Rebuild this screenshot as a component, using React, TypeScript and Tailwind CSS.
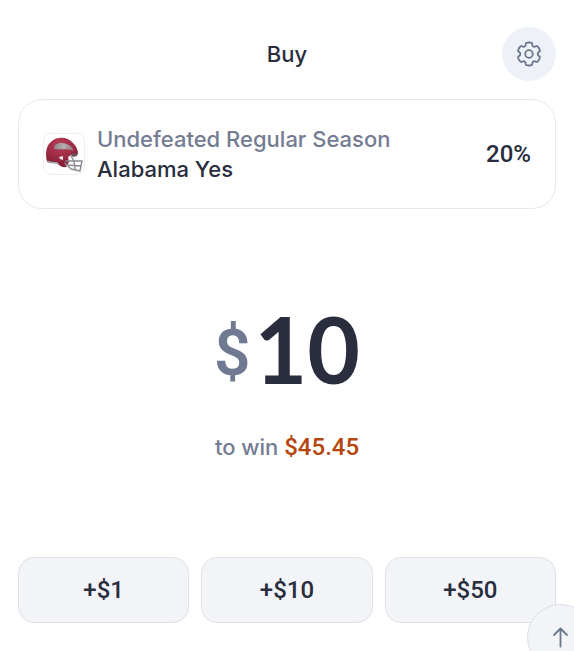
import { useState } from "react";

const QUICK_AMOUNTS = [1, 10, 50];

// Six rounded lobes around the centre of a 28x28 box, first lobe at the top
const GEAR_OUTLINE = Array.from({ length: 120 }, (_, i) => {
    const angle = (i / 120) * Math.PI * 2;
    const radius = 10.1 + 1.4 * Math.tanh(1.2 + 3 * Math.cos(6 * angle));
    return `${(14 + radius * Math.sin(angle)).toFixed(2)},${(14 - radius * Math.cos(angle)).toFixed(2)}`;
}).join(" ");

function GearIcon() {
    return (
        <svg viewBox="0 0 28 28" className="size-7" fill="none" stroke="currentColor" strokeWidth="1.800" aria-hidden="true">
            <polygon points={GEAR_OUTLINE} strokeLinejoin="round" />
            <circle cx="14" cy="14" r="3.800" />
        </svg>
    );
}

function ArrowIcon() {
    return (
        <svg viewBox="0 0 28 28" className="size-7" fill="none" stroke="currentColor" strokeWidth="1.800" aria-hidden="true">
            <path d="M13.500 22.500V4.500M7 11L13.500 4.500L20 11" strokeLinecap="round" strokeLinejoin="round" />
        </svg>
    );
}

function HelmetIcon() {
    return (
        <svg viewBox="0 0 40 40" className="size-full" aria-hidden="true">
            <defs>
                <radialGradient id="shell" cx="0.45" cy="0.25" r="0.8">
                    <stop offset="0" stopColor="#b8405a" />
                    <stop offset="0.5" stopColor="#9f2a43" />
                    <stop offset="1" stopColor="#7a1a32" />
                </radialGradient>
                <linearGradient id="decal" x1="0" y1="0" x2="1" y2="0">
                    <stop offset="0" stopColor="#8d7f84" />
                    <stop offset="0.5" stopColor="#b5afb1" />
                    <stop offset="1" stopColor="#94737d" />
                </linearGradient>
            </defs>
            {/* Shell */}
            <path
                d="M3 28C1 19 2 11 8 7C14 2 24 3 29 9C33 13 34 17 34 20L27 21L24 23L25 28L22 33C17 34 15 30 12 29Z"
                fill="url(#shell)"
            />
            <path d="M3 26C6 28 10 28 13 28L15 30L4 29Z" fill="#a3a3aa" />
            <path d="M10 15C9 9 18 7 25 11C28 13 30 15 29 17C23 14 18 16 10 15Z" fill="url(#decal)" />
            {/* Ear hole and jaw pad */}
            <path d="M15 23L19 22L19 26L16 25Z" fill="#e9e6e8" />
            <path d="M26 20L34 19L33 22L29 23Z" fill="#65535c" />
            {/* Face mask */}
            <g fill="none" stroke="#898992" strokeWidth="1.400" strokeLinejoin="round" strokeLinecap="round">
                <path d="M22 27L38 27L36 37L27 35L21 29M22 31L37 32M30 27L31 35M27 22L30 27" />
            </g>
        </svg>
    );
}

export default function App() {
    const [amount, setAmount] = useState(10);
    const payout = (amount * 4.545).toFixed(2);

    return (
        <main className="relative flex min-h-screen flex-col overflow-hidden bg-white px-[18px] pt-[27px] pb-7 font-['Inter','Liberation_Sans',sans-serif] text-[22px] leading-[30px] font-medium text-[#292d3d]">
            <header className="grid grid-cols-[54px_1fr_54px] items-center">
                <h1 className="col-start-2 text-center">Buy</h1>
                <button
                    type="button"
                    aria-label="Settings"
                    className="flex size-[54px] items-center justify-center rounded-full bg-[#eef1f8] text-[#6c768c]"
                >
                    <GearIcon />
                </button>
            </header>

            <section className="mt-[18px] flex items-center gap-3 rounded-3xl border border-[#e7e8eb] px-6 py-6">
                <div className="size-[42px] shrink-0 overflow-hidden rounded-lg border border-[#eeeeef]">
                    <HelmetIcon />
                </div>
                <div className="min-w-0 flex-1">
                    <p className="text-[#737c92]">Undefeated Regular Season</p>
                    <p>Alabama Yes</p>
                </div>
                <span className="font-['Roboto',sans-serif] text-[24px]">20%</span>
            </section>

            <section className="flex flex-1 flex-col items-center justify-center gap-7">
                <p className="flex items-start gap-1">
                    <span className="font-['Roboto',sans-serif] text-[64px] leading-[100px] font-semibold text-[#6f7a92]">$</span>
                    <span className="font-['Lato',sans-serif] text-[91px] leading-[90px] font-bold">{amount}</span>
                </p>
                <p className="text-[#737c92]">
                    to win <span className="font-['Roboto',sans-serif] text-[24px] text-[#b5460f]">${payout}</span>
                </p>
            </section>

            <div className="grid grid-cols-3 gap-3">
                {QUICK_AMOUNTS.map((value) => (
                    <button
                        key={value}
                        type="button"
                        onClick={() => setAmount(amount + value)}
                        className="h-[66px] rounded-2xl border border-[#dfe1e7] bg-[#f2f4f8] font-['Roboto',sans-serif] text-[24px]"
                    >
                        +${value}
                    </button>
                ))}
            </div>

            {/* Scroll to top, hanging off the corner */}
            <button
                type="button"
                aria-label="Scroll to top"
                className="absolute -right-5 -bottom-5 flex size-[67px] items-center justify-center rounded-full border border-[#dcdfe6] bg-[#f2f4f8] text-[#6c768c]"
            >
                <ArrowIcon />
            </button>
        </main>
    );
}
